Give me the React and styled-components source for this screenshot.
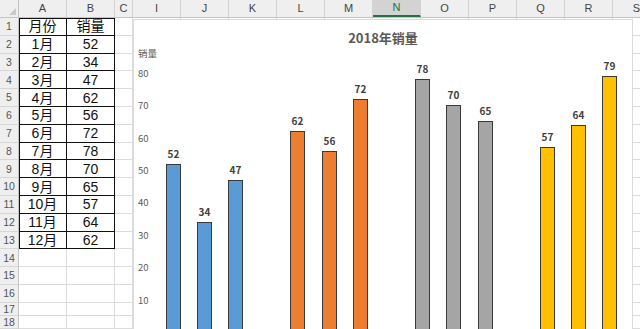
// IMPORTS
import React from "react";
import styled, { createGlobalStyle, css } from "styled-components";

// DATA
const COLUMNS = [
  { key: "A", width: 48 },
  { key: "B", width: 48 },
  { key: "C", width: 18 },
  ..."IJKLMNOPQRS".split("").map(key => ({ key, width: 48 }))
];

const TABLE = [
  ["月份", "销量"],
  ["1月", "52"],
  ["2月", "34"],
  ["3月", "47"],
  ["4月", "62"],
  ["5月", "56"],
  ["6月", "72"],
  ["7月", "78"],
  ["8月", "70"],
  ["9月", "65"],
  ["10月", "57"],
  ["11月", "64"],
  ["12月", "62"]
];

const ROW_COUNT = 18;
const rowHeight = n => (n > 16 ? 13 : 17.8);

// chart: slot index -> value, grouped by colour
const SERIES = [
  { color: "#5B9BD5", bars: [[0, 52], [1, 34], [2, 47]] },
  { color: "#ED7D31", bars: [[4, 62], [5, 56], [6, 72]] },
  { color: "#A5A5A5", bars: [[8, 78], [9, 70], [10, 65]] },
  { color: "#FFC000", bars: [[12, 57], [13, 64], [14, 79]] }
];
const TICKS = [10, 20, 30, 40, 50, 60, 70, 80];
const BASE = 273;
const SCALE = 3.24;
const SLOT = 31.2;
const PLOT_LEFT = 23.4;
const BAR_W = 15;

const SHEET_FONT = `"Liberation Sans", "Noto Sans CJK SC", sans-serif`;
const CHART_FONT = `"Noto Sans CJK SC", "Noto Sans", sans-serif`;

// STYLED COMPONENTS
const GlobalStyle = createGlobalStyle`
  html, body {
    margin: 0;
    padding: 0;
    background: #fff;
    overflow: hidden;
  }
  * {
    box-sizing: border-box;
  }
`;

const Sheet = styled.div`
  position: relative;
  width: 640px;
  height: 329px;
  overflow: hidden;
  font-family: ${SHEET_FONT};
`;

const HeaderRow = styled.div`
  display: flex;
  height: 18px;
  background: #efefef;
  border-bottom: 1px solid #c4c4c4;
`;

const Corner = styled.div`
  position: relative;
  flex: 0 0 19px;
  border-right: 1px solid #c4c4c4;

  &::after {
    content: "";
    position: absolute;
    right: 2px;
    bottom: 2px;
    border-left: 7px solid transparent;
    border-bottom: 7px solid #c9c9c9;
  }
`;

const ColHead = styled.div`
  flex: 0 0 ${p => p.$w}px;
  display: flex;
  align-items: center;
  justify-content: center;
  font-size: 11px;
  line-height: 1;
  color: #444;
  border-right: 1px solid #d2d2d2;

  ${p =>
    p.$selected &&
    css`
      background: #d3d3d3;
      color: #217346;
      border-bottom: 2px solid #217346;
    `}
`;

const Row = styled.div`
  display: flex;
  height: ${p => p.$h}px;
`;

const RowHead = styled.div`
  flex: 0 0 19px;
  display: flex;
  align-items: center;
  justify-content: center;
  background: #efefef;
  border-right: 1px solid #c4c4c4;
  border-bottom: 1px solid #d6d6d6;
  font-size: 10.5px;
  line-height: 1;
  color: #555;
`;

const Cell = styled.div`
  flex: 0 0 ${p => p.$w}px;
  display: flex;
  align-items: center;
  justify-content: center;
  border-right: 1px solid #dcdcdc;
  border-bottom: 1px solid #dcdcdc;
  font-size: 14px;
  line-height: 1;
  color: #111;
  white-space: nowrap;

  ${p =>
    p.$table &&
    css`
      border-right-color: #111;
      border-bottom-color: #111;
    `}
  ${p => p.$top && `box-shadow: inset 0 1px 0 #111;`}
  ${p => p.$left && `box-shadow: inset 1px 0 0 #111${p.$top ? ", inset 0 1px 0 #111" : ""};`}
`;

const Chart = styled.div`
  position: absolute;
  left: 133px;
  top: 19px;
  width: 500px;
  height: 320px;
  background: #fff;
  border: 1px solid #dadada;
  font-family: ${CHART_FONT};
`;

const Title = styled.div`
  padding-top: 9px;
  line-height: 18px;
  height: 27px;
  text-align: center;
  font-size: 13px;
  font-weight: bold;
  color: #595959;
`;

const AxisTitle = styled.div`
  padding-left: 4px;
  line-height: 12px;
  height: 12px;
  font-size: 9.5px;
  color: #595959;
`;

const Plot = styled.svg`
  display: block;
  font-family: ${CHART_FONT};

  .tick {
    font-size: 9.5px;
    fill: #595959;
  }
  .value {
    font-size: 10px;
    font-weight: bold;
    fill: #404040;
  }
`;

// COMPONENTS
const SalesChart = () => (
  <Chart>
    <Title>2018年销量</Title>
    <AxisTitle>销量</AxisTitle>
    <Plot width="498" height="290" viewBox="0 0 498 290">
      {TICKS.map(t => (
        <text key={t} className="tick" x="4" y={BASE - t * SCALE} dominantBaseline="central">
          {t}
        </text>
      ))}
      {SERIES.map(s =>
        s.bars.map(([slot, v]) => {
          const x = Math.round(PLOT_LEFT + slot * SLOT + (SLOT - BAR_W) / 2);
          const top = BASE - v * SCALE;
          return (
            <g key={slot}>
              <rect
                x={x + 0.5}
                y={Math.round(top) + 0.5}
                width={BAR_W - 1}
                height={BASE + 20 - top}
                fill={s.color}
                stroke="#3a3a3a"
                strokeWidth="1"
              />
              <text
                className="value"
                x={x + BAR_W / 2}
                y={top - 10.5}
                textAnchor="middle"
                dominantBaseline="central"
              >
                {v}
              </text>
            </g>
          );
        })
      )}
    </Plot>
  </Chart>
);

const App = () => (
  <Sheet>
    <GlobalStyle />
    <HeaderRow>
      <Corner />
      {COLUMNS.map(c => (
        <ColHead key={c.key} $w={c.width} $selected={c.key === "N"}>
          {c.key}
        </ColHead>
      ))}
    </HeaderRow>
    {Array.from({ length: ROW_COUNT }, (_, i) => {
      const n = i + 1;
      const data = TABLE[i];
      return (
        <Row key={n} $h={rowHeight(n)}>
          <RowHead>{n}</RowHead>
          {COLUMNS.map((c, ci) => {
            const inTable = data && ci < 2;
            return (
              <Cell
                key={c.key}
                $w={c.width}
                $table={inTable}
                $top={inTable && n === 1}
                $left={inTable && ci === 0}
              >
                {inTable ? data[ci] : null}
              </Cell>
            );
          })}
        </Row>
      );
    })}
    <SalesChart />
  </Sheet>
);

// EXPORT
export default App;
